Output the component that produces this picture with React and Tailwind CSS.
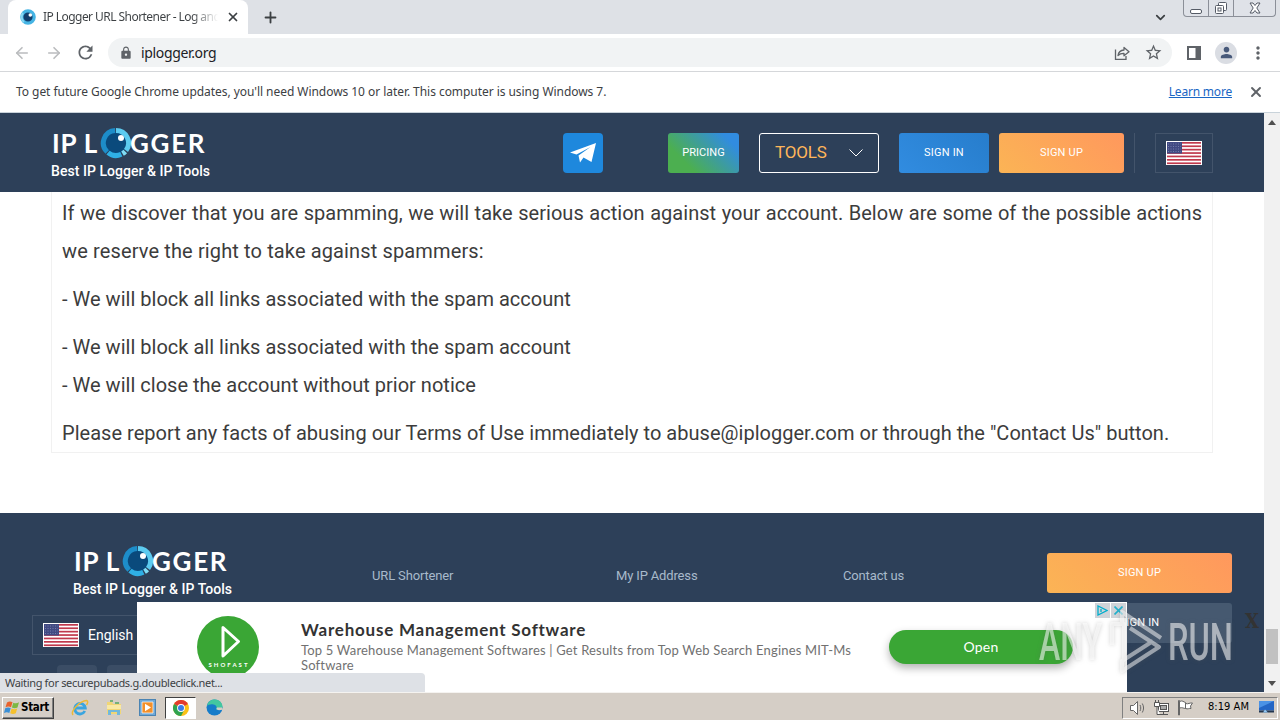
import React from 'react';
import { X, Plus, ArrowLeft, ArrowRight, ChevronDown } from 'lucide-react';
import { MdRefresh, MdLock, MdStarBorder, MdPerson, MdMoreVert } from 'react-icons/md';

const Ring = () => (
    <svg width="32" height="32" viewBox="0 0 32 32" className="shrink-0">
        <circle cx="16" cy="16" r="11" fill="#0a4a7c" />
        <path d="M16 3.5A12.5 12.5 0 0 1 26 23.5" fill="none" stroke="#5ccbf0" strokeWidth="5" />
        <path d="M25.2 24.5A12.5 12.5 0 0 1 22.5 26.7" fill="none" stroke="#7fdcf5" strokeWidth="5" />
        <path d="M21.3 27.3A12.5 12.5 0 0 1 8 25.6" fill="none" stroke="#2fb0e6" strokeWidth="5" />
        <path d="M7.2 25A12.5 12.5 0 0 1 15.2 3.5" fill="none" stroke="#1d8dc9" strokeWidth="5" />
        <circle cx="21" cy="11" r="3" fill="#fff" />
    </svg>
);

const Logo = () => (
    <div className="w-[162px] text-white">
        <div className="flex items-center h-8 font-[Lato,sans-serif] font-bold text-[26px] leading-8">
            <span className="w-[49px] pl-px whitespace-nowrap tracking-[0.8px]">IP L</span>
            <Ring />
            <span className="-ml-0.5 tracking-[1.7px]">GGER</span>
        </div>
        <p className="mt-0.5 h-5 leading-5 text-[14px] font-medium tracking-[0.04px] whitespace-nowrap">Best IP Logger &amp; IP Tools</p>
    </div>
);

const Flag = () => (
    <svg width="36" height="24" viewBox="0 0 36 24" className="shrink-0">
        <rect width="36" height="24" fill="#fff" />
        {[1, 4.4, 7.8, 11.2, 14.6, 18, 21.4].map((y) => (
            <rect key={y} x="1" y={y} width="34" height="1.7" fill="#c0394d" />
        ))}
        <rect x="1" y="1" width="15" height="11.5" fill="#414a83" />
        {[2.5, 5, 7.5, 10].map((y) => (
            <path key={y} d={`M2 ${y + 0.5}h13`} stroke="#757da8" strokeWidth="1" strokeDasharray="1 1.5" />
        ))}
    </svg>
);

const TabStrip = () => (
    <div className="flex h-[34px] bg-[#dee1e6] pl-2">
        <div className="flex items-center w-60 h-[34px] bg-white rounded-t-lg pl-3 pr-2">
            <svg width="16" height="16" viewBox="0 0 16 16" className="shrink-0">
                <circle cx="8" cy="8" r="6.2" fill="#123e6d" stroke="#45b4e4" strokeWidth="3.2" />
                <path d="M3 4A6.4 6.4 0 0 0 4 13" fill="none" stroke="#8bd8f3" strokeWidth="2" />
                <circle cx="10.3" cy="6" r="1.8" fill="#fff" />
            </svg>
            <span className="ml-[7px] w-[175px] overflow-hidden whitespace-nowrap text-[12px] tracking-[-0.55px] bg-linear-to-r from-[#3c4043] from-85% to-transparent bg-clip-text text-transparent">
                IP Logger URL Shortener - Log and Track
            </span>
            <X size={14} strokeWidth={3} className="ml-2 text-[#3c4043] shrink-0" />
        </div>
        <div className="flex items-center ml-3.5">
            <Plus size={17} strokeWidth={2.6} className="text-[#3c4043]" />
        </div>
        <div className="flex items-center ml-auto mr-[15px]">
            <ChevronDown size={15} strokeWidth={2.8} className="text-[#3c4043]" />
        </div>
        <div className="flex w-[93px] h-[17px] mr-1 border border-t-0 border-[#8b8f98] rounded-b bg-[#dfe2e8]">
            <div className="w-[25px] border-r border-[#8b8f98] flex justify-center items-center pt-1.5">
                <div className="w-3 h-[5px] border border-[#555b66] rounded-[2px] bg-white" />
            </div>
            <div className="w-[25px] border-r border-[#8b8f98] flex justify-center pt-px">
                <svg width="14" height="14" viewBox="0 0 14 14" fill="#fff" stroke="#555b66">
                    <rect x="4.5" y="1.5" width="8" height="8" rx="1" />
                    <rect x="1.5" y="4.5" width="8" height="8" rx="1" />
                    <rect x="4" y="7" width="3" height="3" />
                </svg>
            </div>
            <div className="flex-1 flex justify-center items-center">
                <svg width="12" height="12" viewBox="0 0 12 12">
                    <path d="M1 1h3l2 2.5L8 1h3L7.8 6 11 11H8L6 8.5 4 11H1l3.2-5z" fill="#fff" stroke="#555b66" />
                </svg>
            </div>
        </div>
    </div>
);

const Toolbar = () => (
    <div className="flex items-center h-[38px] bg-white border-b border-[#d5d7da] pl-[13px] text-[#5f6368]">
        <ArrowLeft size={18} strokeWidth={2.2} className="text-[#babcbe]" />
        <ArrowRight size={18} strokeWidth={2.2} className="ml-3.5 text-[#babcbe]" />
        <MdRefresh size={21} className="ml-3" />
        <div className="flex items-center ml-3 w-[1064px] h-[29px] rounded-full bg-[#f1f3f4] pl-[11px] pr-[9px]">
            <MdLock size={14} />
            <span className="ml-2 text-[14px] tracking-[-0.35px] text-[#202124]">iplogger.org</span>
            <svg width="16" height="16" viewBox="0 0 16 16" className="ml-auto" fill="none" stroke="#5f6368" strokeWidth="1.3">
                <path d="M1.5 4.5V14.3H12V11" />
                <path d="M4 10.500C4.500 7 7 5.200 10 5V2.500L15 6.800 10 10.800V8.300C7.500 8.200 5.500 9 4 10.500z" strokeLinejoin="round" />
            </svg>
            <MdStarBorder size={19} className="ml-3.5" />
        </div>
        <svg width="14" height="14" viewBox="0 0 14 14" className="ml-[15px]">
            <path d="M0 0h14v14H0zM2 2v10h6.500V2z" fill="#5f6368" fillRule="evenodd" />
        </svg>
        <div className="flex items-center justify-center ml-[14px] w-[22px] h-[22px] rounded-full bg-[#dadde3] text-[#47597a]">
            <MdPerson size={17} />
        </div>
        <MdMoreVert size={20} className="ml-[11px]" />
    </div>
);

const Infobar = () => (
    <div className="flex items-center h-[41px] bg-white border-b border-[#c9d3da] pl-4 text-[12px] text-[#3c4043]">
        <span className="tracking-[-0.05px]">To get future Google Chrome updates, you'll need Windows 10 or later. This computer is using Windows 7.</span>
        <span className="ml-auto underline tracking-[-0.2px] text-[#1a66c4]">Learn more</span>
        <X size={16} strokeWidth={2.8} className="ml-4 mr-4 text-[#5f6368]" />
    </div>
);

const Header = () => (
    <header className="flex h-[79px] bg-[#2d4059] pl-[51px] pt-5 text-[11px] text-white">
        <div className="-mt-[6px]">
            <Logo />
        </div>
        <div className="flex items-center justify-center ml-[350px] w-10 h-10 rounded bg-[#1e88dd]">
            <svg width="26" height="20" viewBox="0 0 26 20" fill="#fff">
                <path d="M0 9.500L26 0 21.500 19 13.500 14.500 10 19.500 8.500 12.500 20.500 4 6.500 11.500z" />
            </svg>
        </div>
        <div className="flex items-center justify-center ml-[65px] w-[71px] h-10 rounded-[3px] bg-linear-[45deg] from-[#4caf50] from-25% to-[#318ce0] to-85% tracking-[0.05px] pt-px">PRICING</div>
        <div className="flex items-center ml-5 w-[120px] h-10 rounded-[3px] border border-white pl-[15px]">
            <span className="text-[17px] tracking-[-0.2px] text-[#ffb65a]">TOOLS</span>
            <svg width="14" height="8" viewBox="0 0 14 8" className="ml-auto mr-[15px]" fill="none" stroke="#fff">
                <path d="M.5.5L7 7 13.5.5" />
            </svg>
        </div>
        <div className="flex items-center justify-center ml-5 w-[90px] h-10 rounded-[3px] bg-linear-[45deg] from-[#318ce0] to-[#277dcc] tracking-[0.2px] pt-px">SIGN IN</div>
        <div className="flex items-center justify-center ml-2.5 w-[125px] h-10 rounded-[3px] bg-linear-[45deg] from-[#fbb455] to-[#ff985d] tracking-[0.2px] pt-px">SIGN UP</div>
        <div className="ml-2.5 h-10 border-l border-[#43546b]" />
        <div className="flex items-center justify-center ml-5 w-[58px] h-10 border border-[#43546b]">
            <Flag />
        </div>
    </header>
);

const Content = () => (
    <main className="h-[321px] bg-white px-[51px] text-[20px] leading-[38px] text-[#3c3c3c]">
        <div className="w-[1162px] h-[261px] border border-t-0 border-[#f1f1f1] px-2.5 pt-0.5 space-y-2.5">
            <div>
                <p className="whitespace-nowrap [text-align-last:justify] tracking-[0.03px]">If we discover that you are spamming, we will take serious action against your account. Below are some of the possible actions</p>
                <p className="tracking-[0.13px]">we reserve the right to take against spammers:</p>
            </div>
            <p className="tracking-[0.02px]">- We will block all links associated with the spam account</p>
            <div className="tracking-[0.02px]">
                <p>- We will block all links associated with the spam account</p>
                <p>- We will close the account without prior notice</p>
            </div>
            <p className="whitespace-nowrap tracking-[0.025px]">Please report any facts of abusing our Terms of Use immediately to abuse@iplogger.com or through the "Contact Us" button.</p>
        </div>
    </main>
);

const Footer = () => (
    <footer className="h-[179px] bg-[#2d4059] overflow-hidden">
        <div className="flex h-[102px] pt-8">
            <div className="ml-[73px] w-[299px]">
                <Logo />
            </div>
            <nav className="flex pt-[21px] text-[13px] leading-5 tracking-[-0.15px] text-[#a8bacb]">
                <span className="w-[244px]">URL Shortener</span>
                <span className="w-[227px]">My IP Address</span>
                <span className="w-[204px]">Contact us</span>
            </nav>
            <div className="pt-2 text-[11px] tracking-[0.2px] text-white">
                <div className="flex items-center justify-center w-[185px] h-10 rounded-[3px] bg-linear-[45deg] from-[#fbb455] to-[#ff985d] pt-px">SIGN UP</div>
                <div className="flex items-center justify-center mt-2.5 w-[185px] h-10 rounded-[3px] bg-[#465970] pt-px">SIGN IN</div>
            </div>
        </div>
        <div className="flex items-center ml-8 w-[185px] h-10 border border-[#43546b] pl-2.5 text-[14px] text-white">
            <Flag />
            <span className="ml-[9px]">English</span>
        </div>
        <div className="flex gap-2.5 ml-[57px] mt-2.5">
            <div className="w-10 h-10 rounded-sm bg-[#3b4d65]" />
            <div className="w-10 h-10 rounded-sm bg-[#3b4d65]" />
        </div>
    </footer>
);

const Ad = () => (
    <div className="absolute left-[137px] bottom-0 flex w-[990px] h-[90px] bg-white overflow-hidden font-[Lato,sans-serif]">
        <svg width="62" height="62" viewBox="0 0 62 62" className="ml-[60px] mt-3.5 shrink-0">
            <circle cx="31" cy="31" r="31" fill="#3aa635" />
            <path d="M26 11.500V40L41.500 25.500z" fill="none" stroke="#fff" strokeWidth="3" strokeLinejoin="round" />
            <text x="11.500" y="51" fill="#fff" fontSize="6" fontWeight="700" textLength="39" fontFamily="Lato, sans-serif">SHOFAST</text>
        </svg>
        <div className="ml-[42px] pt-[17px] w-[588px]">
            <h3 className="text-[17px] leading-[22px] font-bold tracking-[0.77px] text-[#333]">Warehouse Management Software</h3>
            <p className="mt-0.5 text-[13px] leading-[15px] tracking-[0.18px] text-[#717171] whitespace-nowrap">
                Top 5 Warehouse Management Softwares | Get Results from Top Web Search Engines MIT-Ms
                <br />
                Software
            </p>
        </div>
        <div className="flex items-center justify-center mt-7 w-[184px] h-[34px] pb-0.5 rounded-full bg-[#3aa635] text-white text-[14px] tracking-[0.2px] shadow-[0_4px_8px_rgba(0,0,0,0.3)]">Open</div>
        <div className="flex gap-px absolute top-px right-px">
            <div className="flex items-center justify-center w-[15px] h-[15px] bg-[#cfd3d8]">
                <svg width="11" height="11" viewBox="0 0 11 11" fill="none" stroke="#00aecd" strokeWidth="1.3">
                    <path d="M1 1v9l9-4.500z" />
                    <path d="M4 4v3" />
                </svg>
            </div>
            <div className="flex items-center justify-center w-[15px] h-[15px] bg-[#cfd3d8]">
                <svg width="9" height="9" viewBox="0 0 9 9" fill="none" stroke="#23b1cc" strokeWidth="1.6">
                    <path d="M.5.5l8 8M8.500.5l-8 8" />
                </svg>
            </div>
        </div>
    </div>
);

const Watermark = () => (
    <svg width="196" height="70" viewBox="0 0 196 70" className="absolute right-[30px] bottom-[18px] drop-shadow-[0_0_2px_rgba(90,90,90,0.5)]" fill="#fff" fillOpacity="0.55">
        <text x="1" y="56" fontSize="52" fontWeight="500" fontFamily="Roboto, sans-serif" textLength="63" lengthAdjust="spacingAndGlyphs">ANY</text>
        <text x="130" y="56" fontSize="52" fontWeight="500" fontFamily="Roboto, sans-serif" textLength="65" lengthAdjust="spacingAndGlyphs">RUN</text>
        <path d="M74 41V20H86V57M84 18V8L123 34M92 24L121 43L84 67V57L115 37" fill="none" stroke="#fff" strokeOpacity="0.5" strokeWidth="4" strokeLinejoin="round" />
    </svg>
);

const Scrollbar = () => (
    <div className="flex flex-col items-center w-4 bg-[#f1f1f1]">
        <svg width="8" height="5" viewBox="0 0 8 5" className="mt-[7px]"><path d="M0 5L4 0l4 5z" fill="#505050" /></svg>
        <div className="mt-auto w-3 h-[35px] bg-[#c1c1c1]" />
        <svg width="8" height="5" viewBox="0 0 8 5" className="mt-[17px] mb-[6px]"><path d="M0 0l4 5 4-5z" fill="#505050" /></svg>
    </div>
);

const Taskbar = () => (
    <div className="flex items-center h-7 bg-[#d5cec6] border-t border-[#f5f3f0] pl-0.5 pt-0.5 font-['DejaVu_Sans_Condensed','DejaVu_Sans',sans-serif]">
        <div className="flex items-center w-[52px] h-[22px] border border-t-white border-l-white border-b-[#404040] border-r-[#404040] shadow-[inset_-1px_-1px_0_#808080] pl-px">
            <svg width="16" height="15" viewBox="0 0 16 15" className="shrink-0">
                <path d="M3 2.500C5 1 7 1.300 8.500 2.200L7 7.200C5.300 6.200 3.500 6.200 1.500 7.300z" fill="#e8622c" />
                <path d="M9.300 2.700C11.500 3.700 13 3.500 15 2.300L13.500 7.500C11.700 8.500 9.800 8.500 7.900 7.600z" fill="#7db843" />
                <path d="M1.200 8.300C3.200 7.200 5 7.200 6.700 8.200L5.300 13C3.700 12 2 12 0 13z" fill="#3a8fd6" />
                <path d="M7.600 8.600C9.500 9.500 11.300 9.500 13.200 8.500L11.800 13.200C10 14.300 8 14.200 6.200 13.300z" fill="#f5c02c" />
            </svg>
            <span className="ml-px text-[11.5px] font-bold tracking-[-0.3px] text-black">Start</span>
        </div>
        <svg width="18" height="18" viewBox="0 0 18 18" className="ml-[17px]">
            <path d="M13.800 12A5.300 5.300 0 1 1 14.300 9H5" fill="none" stroke="#3ba5df" strokeWidth="2.8" />
            <path d="M2 16C-1 12 9 2 15.500 1.600 17.500 2 16.500 4.500 15.500 6" fill="none" stroke="#ecb936" strokeWidth="1.5" />
        </svg>
        <svg width="18" height="18" viewBox="0 0 18 18" className="ml-4">
            <path d="M2 3h5l1 2h8v10H2z" fill="#f1d675" />
            <path d="M5 2h3M10 4h4" stroke="#57a660" strokeWidth="1.5" />
            <path d="M2 6h14v4H2z" fill="#f9e9a5" />
            <path d="M3 16v-5h12v5h-3v-3H6v3z" fill="#72b8dc" />
        </svg>
        <svg width="17" height="17" viewBox="0 0 17 17" className="ml-4">
            <rect x=".5" y=".5" width="16" height="16" fill="#6fa8d6" stroke="#4b84b3" />
            <path d="M3 3h11v11H3z" fill="#f3902a" stroke="#fff" strokeWidth=".7" />
            <path d="M6 4.800v7.400L12 8.500z" fill="#fff" />
        </svg>
        <div className="flex items-center justify-center ml-[9px] w-[31px] h-[22px] border border-t-[#404040] border-l-[#404040] border-b-white border-r-white bg-white">
            <svg width="16" height="16" viewBox="0 0 16 16">
                <circle cx="8" cy="8" r="8" fill="#fbc116" />
                <path d="M8 8L1.070 4A8 8 0 0 1 14.930 4z" fill="#e33b2e" />
                <path d="M1.070 4A8 8 0 0 0 8 16L11.400 9.800 8 8z" fill="#30a350" />
                <circle cx="8" cy="8" r="3.9" fill="#fff" />
                <circle cx="8" cy="8" r="3" fill="#3b7de8" />
            </svg>
        </div>
        <svg width="17" height="17" viewBox="0 0 17 17" className="ml-2.5">
            <circle cx="8.5" cy="8.5" r="8" fill="#167cc9" />
            <path d="M1 7C2 2 6 .3 9 .5 14 .8 16.700 4.500 16.500 8 16 11 12.500 11.500 10 10.500 11.500 8.500 10.500 6 7.500 5.500 4 5 2 6 1 7z" fill="#43c7a0" />
            <path d="M11 8.500C10 9.500 10.500 11 13 11.200L16.500 10.800 16 8.500z" fill="#d5cec6" />
        </svg>
        <div className="flex items-center ml-auto mr-0.5 w-[156px] h-[22px] border border-t-[#808080] border-l-[#808080] border-b-white border-r-white pl-1.5">
            <svg width="18" height="16" viewBox="0 0 18 16" fill="#fff" stroke="#666">
                <path d="M1.500 5.500h3l4-4v13l-4-4h-3z" />
                <path d="M11 5c1 2 1 4 0 6M13.300 3.500c1.700 3 1.700 6 0 9" fill="none" />
            </svg>
            <svg width="17" height="17" viewBox="0 0 17 17" className="ml-[6px]" fill="#fff" stroke="#555">
                <rect x="5.5" y="4.5" width="10" height="8" />
                <rect x="7.5" y="6.5" width="6" height="4" fill="#aaa" />
                <path d="M6 15.500h9M10.500 12.500v3M1.500 3.500h5v4h-5zM2.500 1v2.500M5.500 1v2.500M4 7.500v8h3" />
            </svg>
            <svg width="17" height="17" viewBox="0 0 17 17" className="ml-[7px]" fill="#fff" stroke="#666">
                <path d="M1.500 16V1.500h1V16z" />
                <path d="M2.500 2.500c3-1.500 4 .5 6 1v6c-2 0-3-1.500-6-.5zM8.500 4.500c3 1 4-1 7-.5l-2 3 .5 2.500c-2-.5-3 1-5.500 0z" />
            </svg>
            <span className="ml-3.5 w-[44px] whitespace-nowrap text-[11px] tracking-[0.05px] text-black">8:19 AM</span>
            <svg width="15" height="13" viewBox="0 0 15 13" className="ml-[7px]">
                <path d="M0 0h15v9.500H0z" fill="#2466c5" />
                <path d="M0 0h15L0 7z" fill="#4b92e5" />
                <path d="M0 9.500h15v2H0z" fill="#23364f" />
                <path d="M4 11.500l2-3 3 3z" fill="#8fc6f3" />
            </svg>
        </div>
    </div>
);

const App = () => {
    return (
        <div className="flex flex-col w-[1280px] h-[720px] overflow-hidden bg-white font-['Noto_Sans',sans-serif]">
            <TabStrip />
            <Toolbar />
            <Infobar />
            <div className="flex h-[579px]">
                <div className="relative w-[1264px] h-[579px] overflow-hidden font-[Roboto,sans-serif]">
                    <Header />
                    <Content />
                    <Footer />
                    <Ad />
                    <span className="absolute left-[1245px] top-[496px] text-[20px] leading-6 font-bold text-[#333] font-['DejaVu_Serif_Condensed','DejaVu_Serif',serif]">X</span>
                    <Watermark />
                    {/* Status bubble */}
                    <div className="absolute left-0 bottom-0 w-[425px] h-[19px] rounded-tr bg-[#dee1e6] pl-[5px] text-[11px] leading-[19px] tracking-[-0.33px] text-[#3c4043] font-['Noto_Sans',sans-serif]">
                        Waiting for securepubads.g.doubleclick.net...
                    </div>
                </div>
                <Scrollbar />
            </div>
            <Taskbar />
        </div>
    );
};

export default App;
